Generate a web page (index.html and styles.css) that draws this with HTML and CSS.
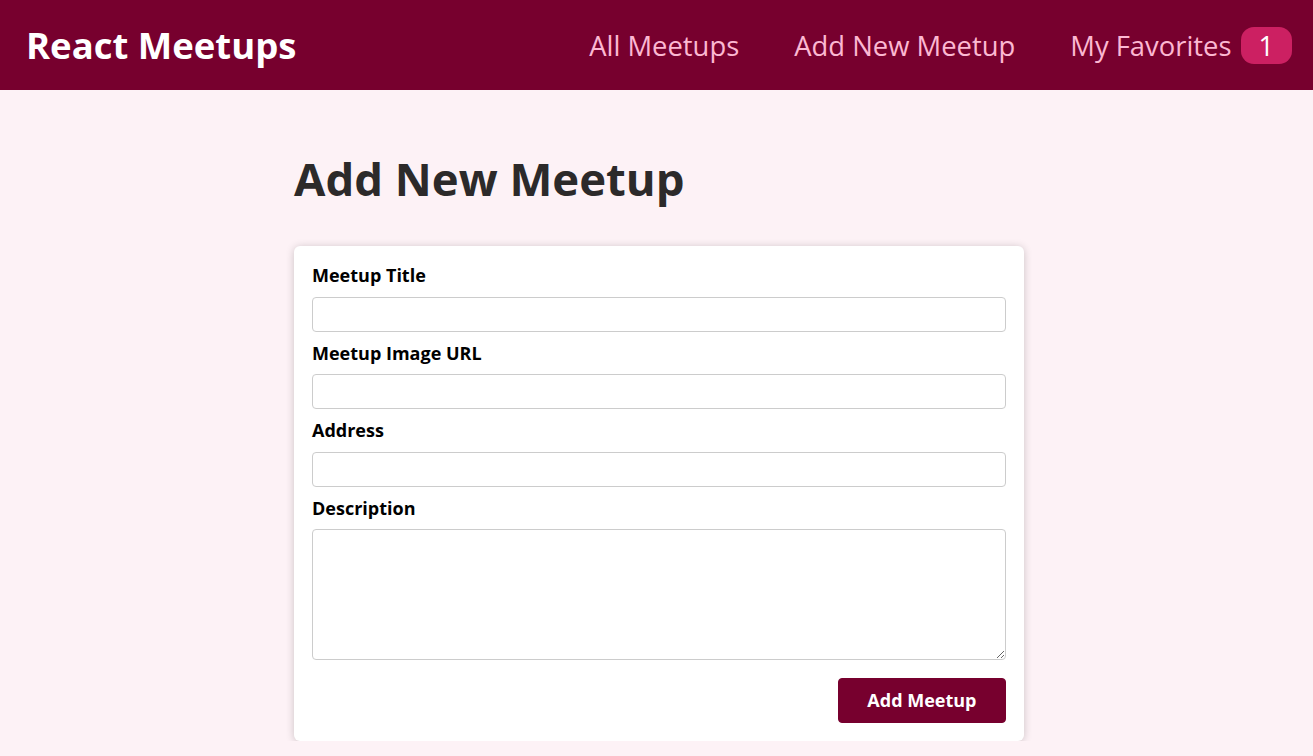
FILE: index.html
```html
<!DOCTYPE html>
<html lang="en">
<head>
    <meta charset="UTF-8">
    <title>React Meetups</title>
    <link rel="stylesheet" href="styles.css">
</head>
<body>
    <header class="header">
        <div class="logo">React Meetups</div>
        <nav>
            <ul class="nav">
                <li><a href="#">All Meetups</a></li>
                <li><a href="#">Add New Meetup</a></li>
                <li><a href="#">My Favorites<span class="badge">1</span></a></li>
            </ul>
        </nav>
    </header>
    <main class="main">
        <h1 class="title">Add New Meetup</h1>
        <div class="card">
            <form class="form" action="#">
                <div class="control">
                    <label for="title">Meetup Title</label>
                    <input id="title" type="text">
                </div>
                <div class="control">
                    <label for="image">Meetup Image URL</label>
                    <input id="image" type="url">
                </div>
                <div class="control">
                    <label for="address">Address</label>
                    <input id="address" type="text">
                </div>
                <div class="control">
                    <label for="description">Description</label>
                    <textarea id="description"></textarea>
                </div>
                <div class="actions">
                    <button type="submit">Add Meetup</button>
                </div>
            </form>
        </div>
    </main>
</body>
</html>
```

FILE: styles.css
```css
* {
    box-sizing: border-box;
}

html {
    font-family: "Open Sans", "Noto Sans", sans-serif;
    font-size: 18px;
}

body {
    margin: 0;
    background: #fdf2f6;
}

/*头部*/
.header {
    height: 90px;
    display: flex;
    align-items: center;
    justify-content: space-between;
    background: #77002e;
    padding: 0 21px 0 26px;
}
.logo {
    font-size: 36.5px;
    font-weight: bold;
    color: #fff;
}
.nav {
    list-style: none;
    margin: 0;
    padding: 0;
    display: flex;
    align-items: center;
    gap: 55px;
}
.nav a {
    text-decoration: none;
    font-size: 27.4px;
    color: #fcb8d2;
    display: flex;
    align-items: center;
}
.badge {
    background: #cc2062;
    color: #fff;
    border-radius: 13px;
    padding: 0 18px;
    margin-left: 9px;
    font-size: 27px;
}

/*内容*/
.main {
    width: 735px;
    margin: 0 auto;
    padding: 57px 0 0 5px;
}
.title {
    margin: 0 0 37px;
    font-size: 45.5px;
    color: #2c2a2a;
}
.card {
    background: #fff;
    border-radius: 6px;
    box-shadow: 0 1px 8px rgba(0, 0, 0, 0.2);
    padding: 17px 18px 18px;
}
.control {
    margin-bottom: 9px;
}
.control label {
    display: block;
    font-weight: bold;
    margin-bottom: 9px;
    color: #000;
    line-height: 24.5px;
}
.control input,
.control textarea {
    display: block;
    width: 100%;
    font: inherit;
    padding: 4px;
    border: 1px solid #ccc;
    border-radius: 4px;
    height: 35px;
}
.control textarea {
    height: 131px;
    resize: vertical;
}
.actions {
    margin-top: 18px;
    text-align: right;
}
.actions button {
    font: inherit;
    font-weight: bold;
    cursor: pointer;
    background: #77002e;
    color: #fff;
    border: 1px solid #77002e;
    border-radius: 4px;
    padding: 9px 28.5px;
    line-height: 24.5px;
}
```
